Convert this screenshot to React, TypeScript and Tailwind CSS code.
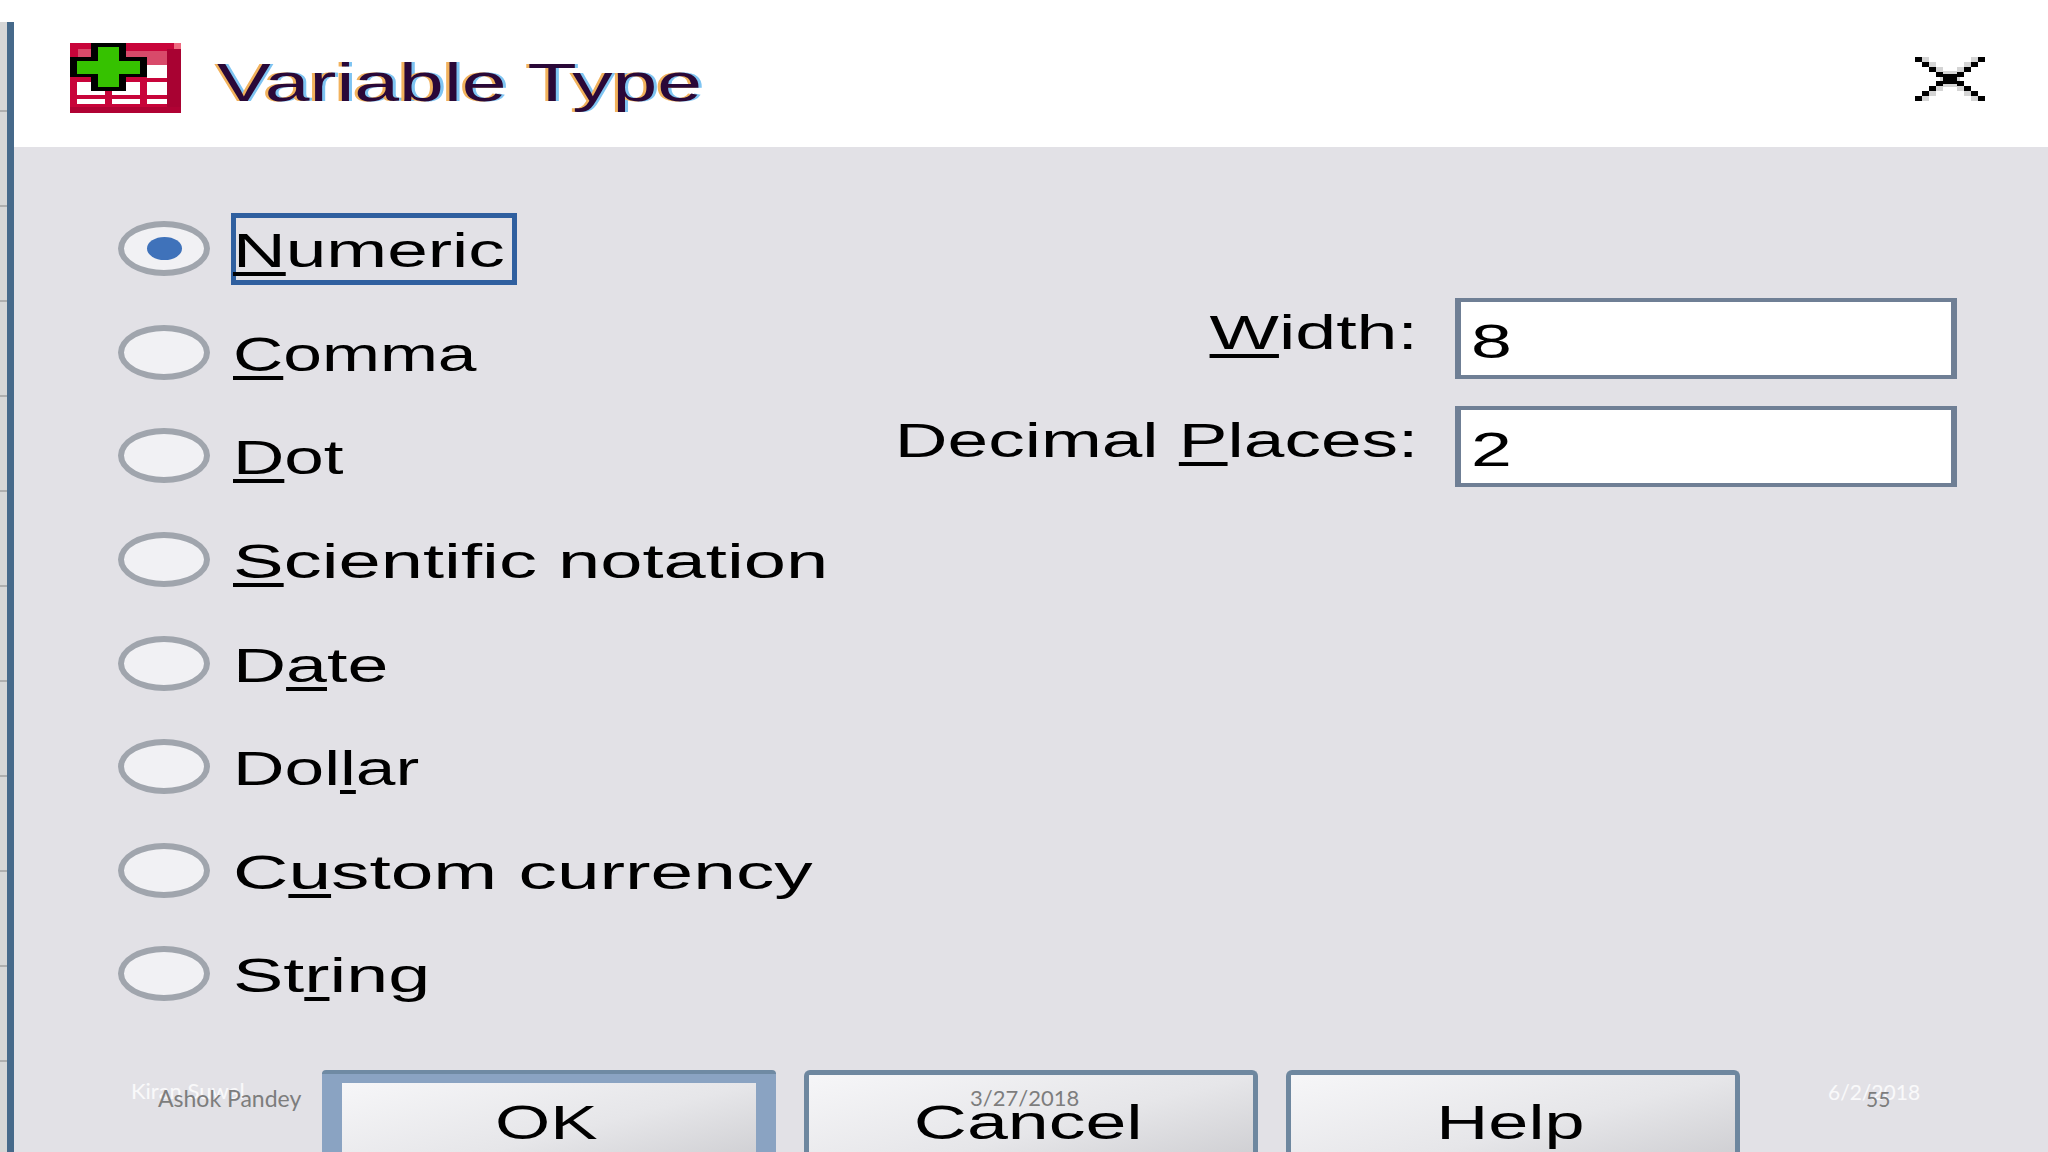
const sans = "font-['Liberation_Sans',Arial,sans-serif]";
const lato = "font-['Lato',sans-serif]";

const options = [
  { before: "", key: "N", after: "umeric", scale: "scale-x-[1.49]", checked: true },
  { before: "", key: "C", after: "omma", scale: "scale-x-[1.42]" },
  { before: "", key: "D", after: "ot", scale: "scale-x-[1.45]" },
  { before: "", key: "S", after: "cientific notation", scale: "scale-x-[1.55]" },
  { before: "D", key: "a", after: "te", scale: "scale-x-[1.5]" },
  { before: "Dol", key: "l", after: "ar", scale: "scale-x-[1.455]" },
  { before: "C", key: "u", after: "stom currency", scale: "scale-x-[1.565]" },
  { before: "St", key: "r", after: "ing", scale: "scale-x-[1.54]" },
];

const ticks = [0, 1, 2, 3, 4, 5, 6, 7, 8, 9, 10];

function AppIcon() {
  return (
    <svg width="111" height="70" viewBox="0 0 111 70" shapeRendering="crispEdges">
      <rect width="111" height="70" fill="#c8043a" />
      <rect x="104" y="0" width="7" height="6" fill="#ef6a80" />
      <rect x="97" y="6" width="14" height="58" fill="#a80232" />
      <rect x="0" y="64" width="111" height="6" fill="#b00234" />
      <rect x="56" y="8" width="41" height="14" fill="#d84a6a" />
      <rect x="8" y="6" width="13" height="8" fill="#d84a6a" />
      <rect x="77" y="22" width="20" height="13" fill="#ffffff" />
      <rect x="7" y="39" width="28" height="13" fill="#ffffff" />
      <rect x="42" y="39" width="28" height="13" fill="#ffffff" />
      <rect x="77" y="39" width="20" height="13" fill="#ffffff" />
      <rect x="7" y="56" width="28" height="5" fill="#ffffff" />
      <rect x="42" y="56" width="28" height="5" fill="#ffffff" />
      <rect x="77" y="56" width="20" height="5" fill="#ffffff" />
      <path d="M21 0h35v14h21v20H56v14H21V34H0V14h21z" fill="#000000" />
      <path d="M28 4h21v14h21v13H49v13H28V31H7V18h21z" fill="#36c200" />
    </svg>
  );
}

function CloseIcon() {
  const cells = [0, 1, 2, 3];
  return (
    <svg width="70" height="44" viewBox="0 0 70 44" shapeRendering="crispEdges">
      <g fill="#d4d4d4">
        <rect x="25" y="14" width="20" height="16" />
        {cells.map((i) => (
          <g key={i}>
            <rect x={i * 7 + 7} y={i * 5} width="7" height="5" />
            <rect x={56 - i * 7} y={i * 5} width="7" height="5" />
            <rect x={i * 7 + 7} y={39 - i * 5} width="7" height="5" />
            <rect x={56 - i * 7} y={39 - i * 5} width="7" height="5" />
          </g>
        ))}
      </g>
      <rect x="28" y="17" width="14" height="10" fill="#000000" />
      {cells.map((i) => (
        <g key={i} fill="#000000">
          <rect x={i * 7} y={i * 5} width="7" height="5" />
          <rect x={63 - i * 7} y={i * 5} width="7" height="5" />
          <rect x={i * 7} y={39 - i * 5} width="7" height="5" />
          <rect x={63 - i * 7} y={39 - i * 5} width="7" height="5" />
        </g>
      ))}
    </svg>
  );
}

function Radio({ checked }: { checked?: boolean }) {
  return (
    <div className="w-[92px] h-[55px] rounded-[50%] border-[6px] border-[#a0a5ad] bg-[#f1f1f4] flex items-center justify-center shrink-0 blur-[0.7px]">
      {checked && <div className="w-[35px] h-[23px] rounded-[50%] bg-[#3f72ba]" />}
    </div>
  );
}

function Field({ value }: { value: string }) {
  return (
    <div className="w-[502px] h-[81px] bg-white border-x-[6px] border-y-[4px] border-[#6f7f95] flex items-center pl-[10px] pt-[6px]">
      <span className={`${sans} text-[49px] leading-none text-black origin-left scale-x-[1.5] inline-block`}>{value}</span>
    </div>
  );
}

function Btn({ label, active, scale }: { label: string; active?: boolean; scale: string }) {
  return (
    <div
      className={
        active
          ? "w-[454px] h-[120px] bg-[#8aa3c2] border-t-[4px] border-[#6f8aa3] pt-[9px] px-[20px] rounded-t-[4px]"
          : "w-[454px] h-[120px] border-t-[5px] border-x-[5px] border-[#6e879f] rounded-t-[6px] overflow-hidden"
      }
    >
      <div className={`w-full h-full bg-gradient-to-br from-[#f6f6f8] via-[#e6e6e9] to-[#c6c6ca] flex justify-center pr-[5px] ${active ? "pt-[15px]" : "pt-[23px]"}`}>
        <span className={`${sans} text-[49px] leading-none h-[56px] text-black inline-block ${scale}`}>{label}</span>
      </div>
    </div>
  );
}

export default function App() {
  return (
    <div className="relative flex w-[2048px] h-[1152px] overflow-hidden bg-white">
      {/* left edge of the slide behind */}
      <div className="w-[14px] pt-[22px] flex shrink-0">
        <div className="w-[7px] bg-[#d6d6d6] flex flex-col gap-[93px] pt-[88px]">
          {ticks.map((t) => (
            <div key={t} className="h-[2px] shrink-0 bg-[#aeaeae]" />
          ))}
        </div>
        <div className="w-[7px] bg-[#46698a]" />
      </div>

      <div className="flex-1 flex flex-col">
        {/* title bar */}
        <div className="h-[147px] shrink-0 bg-white flex items-center justify-between pl-[56px] pr-[63px]">
          <div className="flex items-center gap-[36px] mt-[8px]">
            <AppIcon />
            <span className={`${sans} text-[53px] leading-none text-[#2a0838] inline-block origin-left scale-x-[1.52] mt-[10px] [text-shadow:-2px_0_0_#f2b25c,2px_0_0_#7ec4f2]`}>
              Variable Type
            </span>
          </div>
          <div className="mt-[10px]">
            <CloseIcon />
          </div>
        </div>

        {/* dialog body */}
        <div className="flex-1 bg-[#e2e1e6] flex flex-col pt-[50px] min-h-0">
          <div className="flex justify-between pl-[104px] pr-[91px] shrink-0">
            <div className="flex flex-col">
              {options.map((o) => (
                <div key={o.key + o.after} className="h-[103.6px] flex items-center">
                  <Radio checked={o.checked} />
                  <div className={o.checked ? "ml-[21px] w-[286px] h-[72px] border-[5px] border-[#2f5f9f] flex items-center pt-[4px]" : "ml-[26px] h-[72px] flex items-center pt-[4px]"}>
                    <span className={`${sans} text-[49px] leading-none text-black inline-block origin-left -ml-[3px] ${o.scale} [text-decoration-skip-ink:none]`}>
                      {o.before}
                      <span className="underline decoration-[4px] underline-offset-[5px]">{o.key}</span>
                      {o.after}
                    </span>
                  </div>
                </div>
              ))}
            </div>

            <div className="flex flex-col gap-[27px] mt-[101px]">
              <div className="flex items-center justify-end gap-[37px]">
                <span className={`${sans} text-[49px] leading-none text-black inline-block origin-right scale-x-[1.5] [text-decoration-skip-ink:none] -mt-[12px]`}>
                  <span className="underline decoration-[4px] underline-offset-[5px]">W</span>idth:
                </span>
                <Field value="8" />
              </div>
              <div className="flex items-center justify-end gap-[37px]">
                <span className={`${sans} text-[49px] leading-none text-black inline-block origin-right scale-x-[1.49] [text-decoration-skip-ink:none] -mt-[12px]`}>
                  Decimal <span className="underline decoration-[4px] underline-offset-[5px]">P</span>laces:
                </span>
                <Field value="2" />
              </div>
            </div>
          </div>

          <div className="flex gap-[28px] pl-[308px] mt-[44px]">
            <Btn label="OK" active scale="scale-x-[1.45]" />
            <Btn label="Cancel" scale="scale-x-[1.5]" />
            <Btn label="Help" scale="scale-x-[1.47]" />
          </div>
        </div>
      </div>

      {/* slide footer showing through */}
      <span className={`absolute left-[131px] top-[1074px] ${lato} text-[22px] text-white/80`}>Kiran Suwal</span>
      <span className={`absolute left-[158px] top-[1081px] ${lato} text-[23px] text-[#7d7d7d]`}>Ashok Pandey</span>
      <span className={`absolute left-[970px] top-[1081px] ${lato} text-[22px] text-[#7d7d7d]`}>3/27/2018</span>
      <span className={`absolute left-[1828px] top-[1076px] ${lato} text-[21px] text-white/80`}>6/2/2018</span>
      <span className={`absolute left-[1866px] top-[1083px] ${lato} text-[21px] text-[#7d7d7d]`}>55</span>
    </div>
  );
}
